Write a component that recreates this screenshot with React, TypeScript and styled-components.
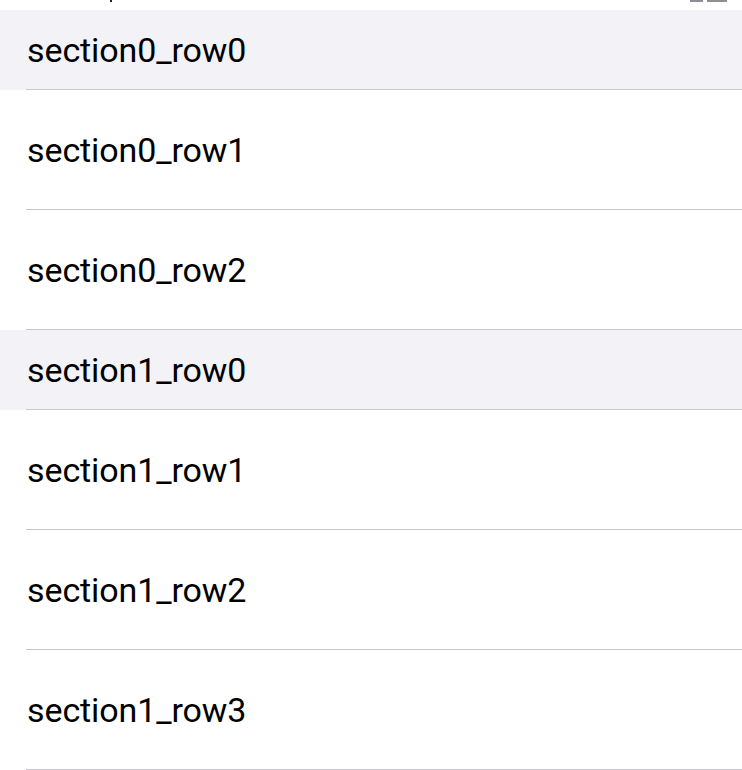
import styled, { createGlobalStyle } from 'styled-components'

const sections = [
  { header: 'section0_row0', rows: ['section0_row1', 'section0_row2'] },
  { header: 'section1_row0', rows: ['section1_row1', 'section1_row2', 'section1_row3'] },
]

const GlobalStyle = createGlobalStyle`
  html, body {
    margin: 0;
    padding: 0;
    background: #ffffff;
  }
  body {
    font-family: Roboto, "Liberation Sans", sans-serif;
    -webkit-font-smoothing: antialiased;
  }
`

const Page = styled.div`
  width: 742px;
  height: 770px;
  overflow: hidden;
  display: flex;
  flex-direction: column;
`

const TopStrip = styled.div`
  height: 10px;
  flex: none;
  display: flex;
  align-items: flex-start;
  justify-content: space-between;
  padding: 0 15px 0 110px;
`

const Descender = styled.span`
  width: 2px;
  height: 2px;
  background: #222;
`

const Bars = styled.div`
  display: flex;
  gap: 4px;
`

const Bar = styled.span<{ w: number }>`
  width: ${({ w }) => w}px;
  height: 2px;
  background: #8e8e93;
`

const Cell = styled.div<{ header?: boolean }>`
  flex: none;
  height: ${({ header }) => (header ? 80 : 120)}px;
  background: ${({ header }) => (header ? '#f2f2f7' : '#ffffff')};
  padding-left: 26px;
  display: flex;
`

const Content = styled.div`
  flex: 1;
  display: flex;
  align-items: center;
  padding-left: 1px;
  border-bottom: 1px solid #c8c7cc;
`

const Label = styled.span`
  font-size: 34px;
  color: #000;
  letter-spacing: -0.1px;
`

export default function App() {
  return (
    <>
      <GlobalStyle />
      <Page>
        <TopStrip>
          <Descender />
          <Bars>
            <Bar w={13} />
            <Bar w={20} />
          </Bars>
        </TopStrip>
        {sections.map((s) => (
          <div key={s.header}>
            <Cell header>
              <Content>
                <Label>{s.header}</Label>
              </Content>
            </Cell>
            {s.rows.map((r) => (
              <Cell key={r}>
                <Content>
                  <Label>{r}</Label>
                </Content>
              </Cell>
            ))}
          </div>
        ))}
      </Page>
    </>
  )
}
